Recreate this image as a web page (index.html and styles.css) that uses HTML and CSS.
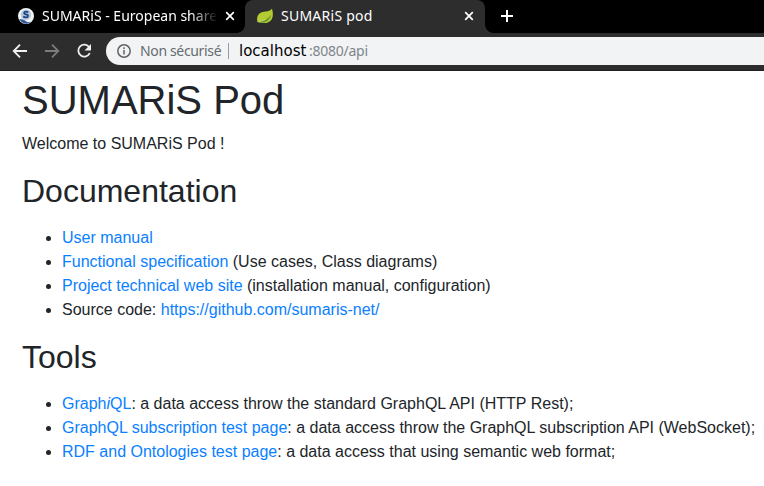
FILE: index.html
```html
<!DOCTYPE html>
<html lang="en">
<head>
<meta charset="utf-8">
<title>SUMARiS pod</title>
<link rel="stylesheet" href="styles.css">
</head>
<body>
<header>
  <div class="tabs">
    <div class="tab">
      <svg class="favicon" viewBox="0 0 16 16"><circle cx="8" cy="8" r="8" fill="#f1f4f6"/><circle cx="8" cy="6.8" r="5.2" fill="#b9c9d5"/><path d="M1.2 11q5 .2 7 2.4 2 1.4 5 .2Q8 18 3 13.5" fill="#31599a"/><path d="M10.2 4.4Q9.2 3.5 7.8 3.6C5.4 3.8 5.6 6 7.8 6.3c3 .4 2.8 2.9.2 3.1-1.2.1-2.1-.3-2.8-.9" fill="none" stroke="#174487" stroke-width="1.7"/></svg>
      <span class="title faded">SUMARiS - European share</span>
      <svg class="close" viewBox="0 0 10 10"><path d="M1.2 1.2l7.6 7.6M8.8 1.2L1.2 8.8"/></svg>
    </div>
    <div class="tab active">
      <svg class="favicon" viewBox="0 0 16 16"><path d="M15 .8Q16.2 5 15.7 8.2C15 13 11 15.2 6.8 15 4 14.9 1.5 14.5.4 13.4-.4 10.6.2 7 2.8 5.2 6 3 11.5 4.4 15 .8z" fill="#b5cb32"/><path d="M1 13.7c5-.5 10-2.4 13.2-7C13 12.5 8 15 3.6 14.6z" fill="#5f982f"/><path d="M.5 13.7q5-.6 8.4-2.3" fill="none" stroke="#d5df77" stroke-width=".8"/></svg>
      <span class="title pod">SUMARiS pod</span>
      <svg class="close" viewBox="0 0 10 10"><path d="M1.2 1.2l7.6 7.6M8.8 1.2L1.2 8.8"/></svg>
    </div>
    <svg class="plus" viewBox="0 0 12 12"><path d="M6 0v12M0 6h12"/></svg>
  </div>
  <div class="toolbar">
    <svg class="nav" viewBox="0 0 16 16"><path d="M15 8H2M8 1.7L1.7 8 8 14.3"/></svg>
    <svg class="nav dim" viewBox="0 0 16 16"><path d="M1 8h13M8 1.7L14.3 8 8 14.3"/></svg>
    <svg class="nav" viewBox="0 0 16 16"><path d="M13.3 4.2A6 6 0 1 0 13.8 10"/><path class="solid" d="M15 1v6.5H8.5z"/></svg>
    <div class="address">
      <svg class="info" viewBox="0 0 14 14"><circle cx="7" cy="7" r="6.2"/><path d="M7 6v4.5M7 3.3v1.6"/></svg>
      <span class="security">Non sécurisé</span>
      <span class="divider"></span>
      <span class="host">localhost</span>
      <span class="path">:8080/api</span>
    </div>
  </div>
</header>
<main>
  <h1>SUMARiS Pod</h1>
  <p>Welcome to SUMARiS Pod !</p>
  <h2>Documentation</h2>
  <ul>
    <li><a>User manual</a></li>
    <li><a>Functional specification</a> (Use cases, Class diagrams)</li>
    <li><a>Project technical web site</a> (installation manual, configuration)</li>
    <li>Source code: <a>https://github.com/sumaris-net/</a></li>
  </ul>
  <h2>Tools</h2>
  <ul>
    <li><a>Graph<i>i</i>QL</a>: a data access throw the standard GraphQL API (HTTP Rest);</li>
    <li><a>GraphQL subscription test page</a>: a data access throw the GraphQL subscription API (WebSocket);</li>
    <li><a>RDF and Ontologies test page</a>: a data access that using semantic web format;</li>
  </ul>
</main>
</body>
</html>
```
FILE: styles.css
```css
* { box-sizing: border-box; }
body {
  margin: 0;
  height: 486px;
  overflow: hidden;
  background: #fff;
  color: #212529;
  font: 16px/24px "Liberation Sans", Arial, sans-serif;
}
header { font-family: "Noto Sans", sans-serif; }
svg { display: block; flex: none; fill: none; }
.tabs { display: flex; height: 33px; background: #000; }
.tab {
  display: flex;
  align-items: center;
  width: 245px;
  height: 33px;
  padding: 0 10px 1px 18px;
}
.tab.active {
  position: relative;
  width: 240px;
  padding: 0 11px 1px 12px;
  background: #2d2d2d;
  border-radius: 8px 8px 0 0;
}
.tab.active::before,
.tab.active::after {
  content: "";
  position: absolute;
  bottom: 0;
  width: 8px;
  height: 8px;
}
.tab.active::before { left: -8px; background: radial-gradient(circle at 0 0, #000 7.5px, #2d2d2d 8px); }
.tab.active::after { right: -8px; background: radial-gradient(circle at 100% 0, #000 7.5px, #2d2d2d 8px); }
.favicon { width: 16px; height: 16px; }
.title {
  margin-left: 8px;
  color: #fff;
  font-size: 14px;
  line-height: 20px;
  letter-spacing: 0;
  white-space: nowrap;
}
.pod { letter-spacing: 0.25px; }
.faded {
  width: 176px;
  -webkit-mask-image: linear-gradient(90deg, #000 148px, transparent 176px);
  mask-image: linear-gradient(90deg, #000 148px, transparent 176px);
}
.close { width: 10px; height: 10px; margin-left: auto; stroke: #fff; stroke-width: 1.7; }
.tab:first-child .close { margin-left: 7px; }
.plus { width: 12px; height: 12px; margin: 10px 0 0 16px; stroke: #fff; stroke-width: 2; }
.toolbar {
  display: flex;
  align-items: center;
  height: 38px;
  padding: 0 0 1px 12px;
  background: #2d2d2d;
  border-bottom: 1px solid #201f20;
}
.nav { width: 16px; height: 16px; margin-right: 16px; stroke: #f1f1f1; stroke-width: 1.8; }
.dim { stroke: #7c7c7c; }
.nav .solid { fill: #f1f1f1; stroke: none; }
.nav:nth-child(3) { margin-right: 14px; }
.address {
  display: flex;
  align-items: center;
  flex: 1;
  height: 28px;
  padding-left: 11px;
  background: #f1f3f4;
  border-radius: 14px 0 0 14px;
  font-size: 14px;
  line-height: 20px;
  white-space: nowrap;
}
.info { width: 14px; height: 14px; stroke: #5f6368; stroke-width: 1.5; }
.security { width: 81px; margin-left: 9px; color: #666b70; letter-spacing: -0.35px; }
.divider { width: 1px; height: 16px; margin: 0 10px 0 7px; background: #9a9da0; }
.host { width: 70px; color: #000; font-family: "DejaVu Sans", sans-serif; font-size: 15px; }
.path { color: #80868b; letter-spacing: -0.25px; }
main { padding: 5px 0 0 22px; }
h1, h2, p, ul { margin: 0; font-weight: 400; }
h1 { margin-bottom: 8px; font-size: 40px; line-height: 48px; }
p { margin-bottom: 16px; }
h2 { margin-bottom: 16px; font-size: 32px; line-height: 38px; }
ul { margin-bottom: 16px; padding-left: 40px; }
li { white-space: nowrap; }
a { color: #0a80ff; }
```
